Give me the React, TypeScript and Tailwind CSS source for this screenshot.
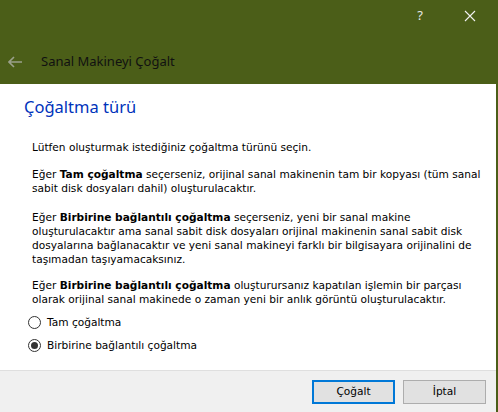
import { useState } from "react";

const body = { fontFamily: '"DejaVu Sans", Verdana, sans-serif' };
const ui = { fontFamily: '"Noto Sans", "Open Sans", sans-serif' };

function Radio({ checked, label, onClick }: { checked: boolean; label: string; onClick: () => void }) {
  return (
    <label onClick={onClick} className="flex items-center gap-[6px] h-[23px] cursor-default">
      <span className="w-[13px] h-[13px] rounded-full border border-[#333] bg-white flex items-center justify-center">
        {checked && <span className="w-[7px] h-[7px] rounded-full bg-[#333]" />}
      </span>
      <span>{label}</span>
    </label>
  );
}

export default function App() {
  const [mode, setMode] = useState<"full" | "linked">("linked");

  return (
    <div className="w-[498px] h-[412px] flex flex-col bg-[#4b5e18] text-[10.6px] text-black" style={body}>
      {/* title bar */}
      <div className="h-[84px] flex flex-col text-white">
        <div className="h-[32px] flex justify-end items-center pr-[22px] gap-[41px]" style={ui}>
          <span className="text-[13px] text-[#e8e8e8]">?</span>
          <svg width="12" height="12" viewBox="0 0 12 12">
            <path d="M1 1 L11 11 M11 1 L1 11" stroke="#f2f2f2" strokeWidth="1.1" />
          </svg>
        </div>
        <div className="flex items-center h-[28px] pl-[8px] mt-[16px]">
          <svg width="15" height="12" viewBox="0 0 15 12">
            <path d="M1 6 H14 M6 1 L1 6 L6 11" stroke="#9aa08a" strokeWidth="1.6" fill="none" />
          </svg>
          <span className="ml-[18px] text-[13px] text-[#111]" style={ui}>Sanal Makineyi Çoğalt</span>
        </div>
      </div>

      {/* content */}
      <div className="flex-1 flex flex-col mr-[2px] bg-white">
        <div className="flex-1 flex flex-col">
          <h1 className="text-[16.5px] text-[#0033bb] pl-[24px] pt-[12px] leading-[22px]" style={ui}>
            Çoğaltma türü
          </h1>
          <div className="pl-[32px] pt-[22px] leading-[14px] whitespace-nowrap flex flex-col gap-[13px]">
            <p>Lütfen oluşturmak istediğiniz çoğaltma türünü seçin.</p>
            <p>
              Eğer <b>Tam çoğaltma</b> seçerseniz, orijinal sanal makinenin tam bir kopyası (tüm sanal
              <br />
              sabit disk dosyaları dahil) oluşturulacaktır.
            </p>
            <p className="mt-[2px]">
              Eğer <b>Birbirine bağlantılı çoğaltma</b> seçerseniz, yeni bir sanal makine
              <br />
              oluşturulacaktır ama sanal sabit disk dosyaları orijinal makinenin sanal sabit disk
              <br />
              dosyalarına bağlanacaktır ve yeni sanal makineyi farklı bir bilgisayara orijinalini de
              <br />
              taşımadan taşıyamacaksınız.
            </p>
            <p className="-mt-[1px]">
              Eğer <b>Birbirine bağlantılı çoğaltma</b> oluşturursanız kapatılan işlemin bir parçası
              <br />
              olarak orijinal sanal makinede o zaman yeni bir anlık görüntü oluşturulacaktır.
            </p>
          </div>
          <div className="pl-[28px] pt-[5px] flex flex-col">
            <Radio checked={mode === "full"} label="Tam çoğaltma" onClick={() => setMode("full")} />
            <Radio checked={mode === "linked"} label="Birbirine bağlantılı çoğaltma" onClick={() => setMode("linked")} />
          </div>
        </div>

        {/* footer */}
        <div className="h-[42px] border-t border-[#dfdfdf] bg-[#f0f0f0] flex justify-end items-center gap-[8px] pr-[10px]">
          <button className="w-[83px] h-[24px] bg-[#e1e1e1] border-2 border-[#0078d7]">Çoğalt</button>
          <button className="w-[83px] h-[24px] bg-[#e1e1e1] border border-[#adadad]">İptal</button>
        </div>
      </div>
    </div>
  );
}
